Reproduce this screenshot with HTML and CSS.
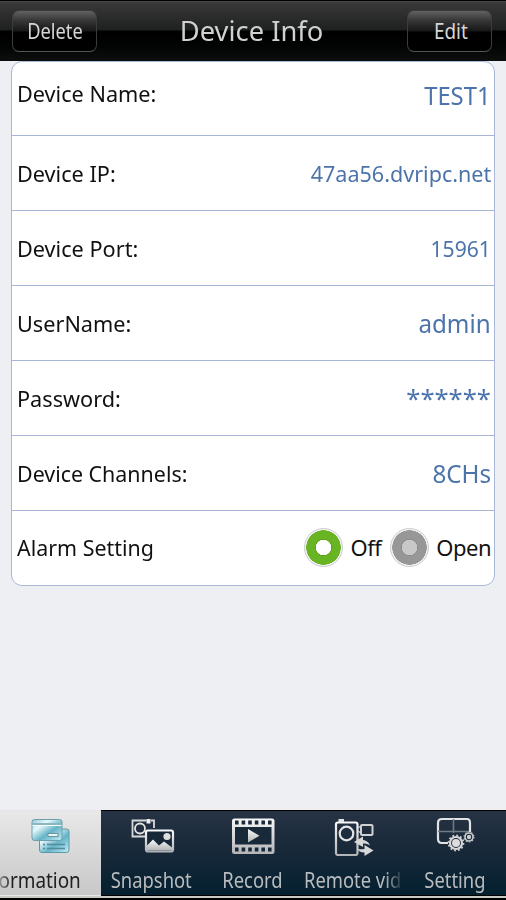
FILE: index.html
```html
<!DOCTYPE html>
<html lang="en">
<head>
<meta charset="utf-8">
<title>Device Info</title>
<link rel="stylesheet" href="styles.css">
</head>
<body>
<div class="screen">
  <header class="header">
    <button class="btn"><span class="btn-delete">Delete</span></button>
    <h1 class="title">Device Info</h1>
    <button class="btn"><span class="btn-edit">Edit</span></button>
  </header>

  <main class="content">
    <section class="card">
      <div class="row row-first"><span class="label">Device Name:</span><span class="value v-name">TEST1</span></div>
      <div class="row"><span class="label">Device IP:</span><span class="value small v-ip">47aa56.dvripc.net</span></div>
      <div class="row"><span class="label">Device Port:</span><span class="value small v-port">15961</span></div>
      <div class="row"><span class="label">UserName:</span><span class="value v-user">admin</span></div>
      <div class="row"><span class="label">Password:</span><span class="value v-pass">******</span></div>
      <div class="row"><span class="label narrow">Device Channels:</span><span class="value v-chan">8CHs</span></div>
      <div class="row">
        <span class="label narrow">Alarm Setting</span>
        <div class="options">
          <span class="radio on"></span><span class="option l-off">Off</span>
          <span class="radio"></span><span class="option">Open</span>
        </div>
      </div>
    </section>
  </main>

  <nav class="tabs">
    <div class="tab active">
      <svg class="icon" viewBox="0 0 48 40">
        <defs>
          <linearGradient id="card" x1="0" y1="0" x2="1" y2="1"><stop offset="0" stop-color="#8fc9d8"/><stop offset=".3" stop-color="#e6f8fc"/><stop offset=".6" stop-color="#65b4c8"/><stop offset="1" stop-color="#c5edf5"/></linearGradient>
          <linearGradient id="silver" x1="0" y1="0" x2="0" y2="1"><stop offset="0" stop-color="#f8f8f8"/><stop offset="1" stop-color="#b2b4b6"/></linearGradient>
        </defs>
        <rect x="12.500" y="13" width="29.500" height="23.500" rx="2.500" fill="url(#card)" stroke="#5e98a6"/>
        <path d="M16 28.500h2M20 28.500h18M16 32.500h2M20 32.500h18" stroke="#508c9c" stroke-width="1.500"/>
        <rect x="5" y="3.500" width="30" height="21" rx="2.500" fill="url(#card)" stroke="#6e9fab"/>
        <path d="M5.500 8h29" stroke="#8ab6c0" stroke-width="2"/><path d="M5.500 9.500h29" stroke="#f6ffff"/>
        <rect x="21" y="17.500" width="10" height="3" fill="#e7f7fa" stroke="#6b939c"/>
      </svg>
      <span class="tab-text t-info">Information</span>
    </div>
    <div class="tab">
      <svg class="icon" viewBox="0 0 48 40">
        <path d="M17 20.500H4.500V4.500h14M23 4.500h3V12" fill="none" stroke="#d8d9da" stroke-width="1.800"/>
        <circle cx="12" cy="12.500" r="5" fill="none" stroke="#e4e4e4" stroke-width="1.800"/>
        <path d="M18.500 3h4v4.500h-4z" fill="#eee"/>
        <rect x="18" y="14.500" width="27" height="21" rx="2" fill="#172738" stroke="url(#silver)" stroke-width="2.200"/>
        <path d="M19 34.500v-5l6-6 6 6 5-4 8 6v3z" fill="url(#silver)"/><circle cx="39" cy="20.500" r="3.600" fill="#dedede"/>
      </svg>
      <span class="tab-text">Snapshot</span>
    </div>
    <div class="tab">
      <svg class="icon" viewBox="0 0 48 40">
        <rect x="3" y="2.500" width="42.500" height="35.500" rx="2.500" fill="url(#silver)"/>
        <path d="M6 11h36.500v17.500H6z" fill="#182939"/>
        <path d="M6 6.500h37M6 33.500h37" stroke="#182939" stroke-width="4" stroke-dasharray="3.600 3"/>
        <path d="M19 13l11.500 6.700L19 26.500z" fill="url(#silver)"/>
      </svg>
      <span class="tab-text t-rec">Record</span>
    </div>
    <div class="tab">
      <svg class="icon" viewBox="0 0 48 40">
        <rect x="6" y="6.500" width="21.500" height="32.500" rx="2" fill="none" stroke="url(#silver)" stroke-width="2.200"/>
        <path d="M8.500 3h5.500v3H8.500z" fill="#e4e4e4"/>
        <circle cx="16.500" cy="17.500" r="6.800" fill="none" stroke="#e4e4e4" stroke-width="2.200"/>
        <path d="M28 12l3-2M28 15l3 2" stroke="#c5c7c9" stroke-width="1.500"/>
        <rect x="31" y="9" width="11.500" height="10" rx="1" fill="none" stroke="#d0d1d3" stroke-width="2"/>
        <path d="M24 26l9-5.500v3.500c3 .5 6 2 7 5.500-2-1.500-4-2-7-2v3.500z" fill="#d8d8d8"/>
        <path d="M43.500 34.500l-9 5.500v-3.500c-4 0-6-1.500-7-4 2 1 4 1 7 .5v-4z" fill="#d8d8d8"/>
      </svg>
      <span class="tab-text fade">Remote vide</span>
    </div>
    <div class="tab">
      <svg class="icon" viewBox="0 0 48 40">
        <path d="M17 27h-6q-4 0-4-4V7q0-4 4-4h25q3 0 3 4v9" fill="none" stroke="#e2e3e4" stroke-width="2.200"/>
        <path d="M22.500 3v14M7 15.500h31" stroke="#707c86" stroke-width="1.500"/>
        <circle cx="25" cy="27" r="7.500" fill="none" stroke="#c6c8ca" stroke-width="1.800" stroke-dasharray="1.900 2.027"/>
        <circle cx="25" cy="27" r="6" fill="#15283a" stroke="#d8d8d8" stroke-width="2.200"/>
        <circle cx="25" cy="27" r="4" fill="#dcdcdc"/>
        <circle cx="38" cy="21" r="5" fill="none" stroke="#a9adb1" stroke-width="1.200" stroke-dasharray="1.500 1.642"/>
        <circle cx="38" cy="21" r="4" fill="#15283a" stroke="#c8c9ca" stroke-width="1.700"/>
        <circle cx="38" cy="21" r="2.200" fill="#ccc"/>
      </svg>
      <span class="tab-text">Setting</span>
    </div>
  </nav>
</div>
</body>
</html>
```

FILE: styles.css
```css
* { box-sizing: border-box; }
body { margin: 0; font-family: "Noto Sans", "Open Sans", sans-serif; }
.screen { width: 506px; height: 900px; display: flex; flex-direction: column; background: #eeeff3; overflow: hidden; }
.header {
  height: 61px; flex: none; display: flex; justify-content: space-between; padding: 9px 14px 0 12px;
  border-top: 1px solid #000;
  background: linear-gradient(#4a4a4a 0, #383838 2px, #1f2020 29px, #000 30px, #020303 45px, #0d0f0f 60px);
}
.btn {
  width: 85px; height: 42px; padding: 0; border: 1px solid #3c3c3c; border-bottom-color: #555; border-radius: 7px;
  background: linear-gradient(#626262, #383838 9px, #171717 20px, #000 21px);
  color: #d6d6d6; font: 21px/39px "Noto Sans", sans-serif; white-space: nowrap;
}
.btn span { display: inline-block; transform: scaleX(.87); margin: 0 -6px; }
.btn .btn-edit { transform: translateX(1px) scaleX(.9); }
.title { margin: 0; font-size: 28px; line-height: 41px; font-weight: 400; color: #d0d0d0; white-space: nowrap; transform: scaleX(.975); }
.content { flex: 1; padding: 0 11px; }
.card { height: 525px; border: 1px solid #a9b8d8; border-radius: 11px; background: #fff; overflow: hidden; }
.row { height: 75px; display: flex; align-items: center; justify-content: space-between; padding: 0 3px 0 5px; border-bottom: 1px solid #a6b4d6; }
.row:last-child { border: 0; height: 72px; }
.row-first { height: 74px; }
.row-first .label { margin-bottom: 11px; }
.row-first .value { margin-bottom: 8px; }
.label, .option { font-size: 22px; line-height: 30px; color: #111; white-space: nowrap; }
.label { transform: scaleX(.985); transform-origin: left; }
.label.narrow { transform: scaleX(.973); }
.value { font-size: 26px; line-height: 34px; color: #4c74ab; white-space: nowrap; transform-origin: right; }
.value.small { font-size: 22px; }
.v-name { transform: scaleX(.915); }
.v-ip { transform: scaleX(.98); }
.v-port { transform: scaleX(.96); }
.v-user { transform: scaleX(.93); }
.v-pass { transform: scaleX(.985); }
.v-chan { transform: scaleX(.93); }
.options { display: flex; align-items: center; }
.option { letter-spacing: -.5px; }
.radio {
  width: 39px; height: 39px; border-radius: 50%; border: 1px solid #ccc; margin-right: 7px;
  background: radial-gradient(circle, #c8c8c8 0 7.500px, #8c8c8c 8px, #979797 9px 17px, #f3f3f3 17.500px);
}
.radio.on { background: radial-gradient(circle, #fff 0 7.500px, #5ca015 8px, #69b422 9px 17px, #f3f3f3 17.500px); }
.l-off { margin-right: 9px; }
.tabs {
  height: 90px; flex: none; display: grid; grid-template-columns: 101px 101px 101px 101px 102px;
  border-bottom: 1px solid #000; background: linear-gradient(#c9c9c9 86px, #c9cac6 86px 88px, #000 88px);
}
.tab {
  height: 86px; display: flex; flex-direction: column; align-items: center; overflow: hidden;
  border-top: 1px solid #000; border-bottom: 1px solid #000; padding-top: 5px;
  background: linear-gradient(#263344, #172839 50%, #03202f); color: #b9bcbf;
}
.tab.active { border-color: #e4e4e4 transparent transparent; background: linear-gradient(#e8e8e8, #c8c8c8); color: #202020; }
.icon { width: 48px; height: 40px; flex: none; }
.tab-text { font-size: 21px; line-height: 30px; margin-top: 9px; white-space: nowrap; transform: scaleX(.875); }
.t-info {
  align-self: flex-end; margin-right: 20px; transform: scaleX(.9); transform-origin: right;
  -webkit-mask-image: linear-gradient(90deg, transparent 22px, #000 42px); mask-image: linear-gradient(90deg, transparent 22px, #000 42px);
}
.fade {
  align-self: flex-start; margin-left: 1px; width: 112px; overflow: hidden; transform-origin: left;
  -webkit-mask-image: linear-gradient(90deg, #000 92px, transparent 114px); mask-image: linear-gradient(90deg, #000 92px, transparent 114px);
}
```
